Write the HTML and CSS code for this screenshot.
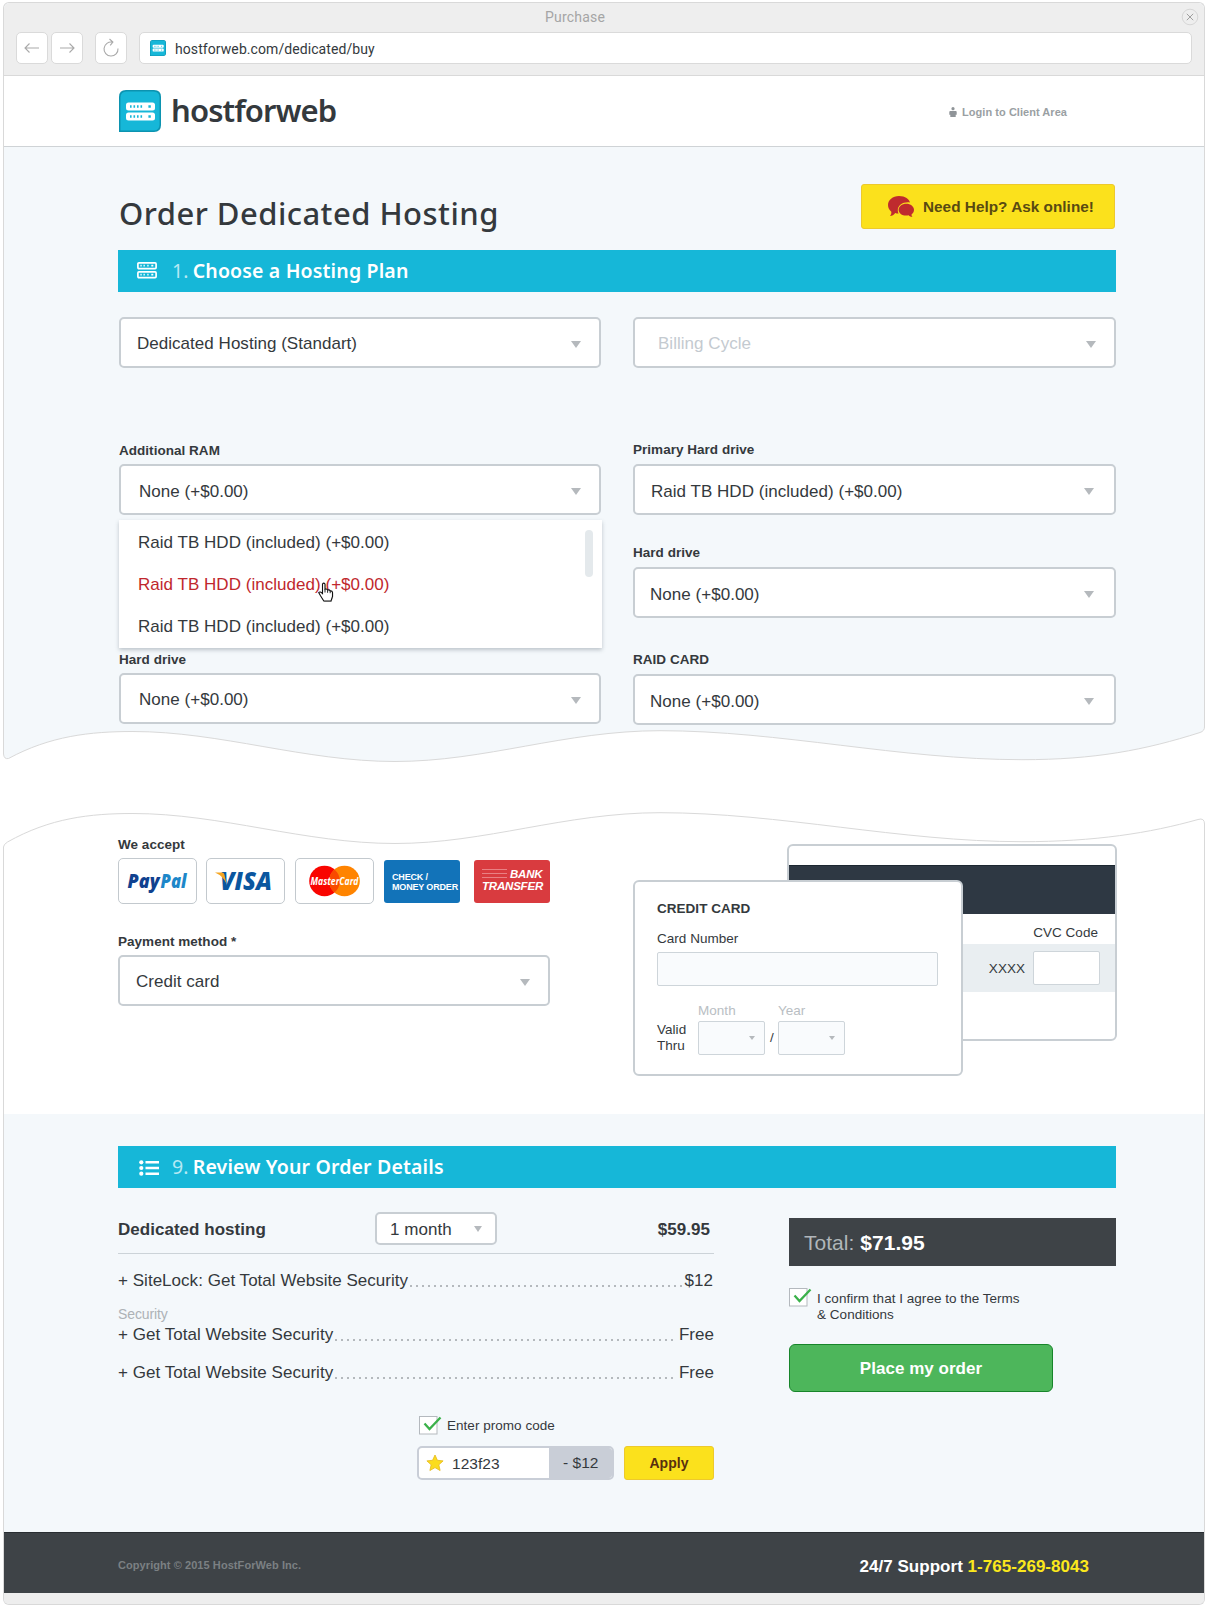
FILE: index.html
```html
<!DOCTYPE html>
<html lang="en">
<head>
<meta charset="utf-8">
<title>Purchase</title>
<link rel="stylesheet" href="styles.css">
</head>
<body>
<svg class="defs" width="0" height="0" aria-hidden="true">
  <symbol id="logo" viewBox="0 0 42 42">
    <path d="M0 42V7Q0 0 7 0H35Q42 0 42 7V35Q42 42 35 42Z" fill="#0c93b0"/>
    <path d="M1.5 40.500V7.500Q1.500 1.500 7.500 1.500H34.500Q40.500 1.500 40.500 7.500V34.500Q40.500 40.500 34.500 40.500Z" fill="#16b7d8"/>
    <rect x="7" y="12.500" width="29" height="8" rx="2.500" fill="#fff"/>
    <rect x="7" y="22.500" width="29" height="8" rx="2.500" fill="#fff"/>
    <path d="M11 16.500h1.600m1.900 0h1.600m1.900 0h1.600m1.900 0h1.600m6.300 0h2.400M11 26.500h1.600m1.900 0h1.600m1.900 0h1.600m1.900 0h1.600m6.300 0h2.400" stroke="#16b7d8" stroke-width="2.400"/>
  </symbol>
  <symbol id="check" viewBox="0 0 24 20">
    <rect x=".5" y="1.500" width="17.500" height="17.500" fill="#fff" stroke="#b4b9be"/>
    <path d="M5.500 8.500l5 5.500L21.500 2.500" fill="none" stroke="#3bb14a" stroke-width="2.300"/>
  </symbol>
</svg>

<div class="window window-top">
  <header class="chrome">
    <div class="chrome-title">Purchase</div>
    <svg class="close" width="18" height="18" viewBox="0 0 18 18"><circle cx="9" cy="9" r="7.800" fill="none" stroke="#d6d6d6"/><path d="M5.800 5.800l6.400 6.400M12.200 5.800l-6.400 6.400" stroke="#a0a0a0" fill="none"/></svg>
    <div class="toolbar">
      <span class="tool"><svg width="18" height="12" viewBox="0 0 18 12"><path d="M16 6H2M6.500 1.500L2 6l4.500 4.500"/></svg></span>
      <span class="tool"><svg width="18" height="12" viewBox="0 0 18 12"><path d="M2 6h14M11.500 1.500L16 6l-4.500 4.500"/></svg></span>
      <span class="tool reload"><svg width="18" height="20" viewBox="0 0 18 20"><path d="M16 10.500A7 7 0 1 1 10.500 4.200M7.500 1l3.400 3-2.700 3.400"/></svg></span>
      <div class="url"><svg width="16" height="16"><use href="#logo"/></svg><span>hostforweb.com/dedicated/buy</span></div>
    </div>
  </header>

  <div class="site-head">
    <svg width="42" height="42"><use href="#logo"/></svg>
    <span class="brand">hostforweb</span>
    <span class="login"><svg width="8" height="10" viewBox="0 0 8 10"><circle cx="4" cy="1.700" r="1.600"/><path d="M.3 4.900q0-1 1-1h5.400q1 0 1 1V7.800h-1V10H1.300V7.800h-1z"/></svg>Login to Client Area</span>
  </div>

  <main class="order">
    <div class="title-row">
      <h1>Order Dedicated Hosting</h1>
      <button class="help"><svg width="26" height="21" viewBox="0 0 26 21"><path d="M11 0C17.500 0 21 3 22 6.400 15.500 5.500 9.500 9 9.800 14.500c0 1.200.3 2.200.8 3-1.300 0-2.300-.1-3.400-.5C6 18.800 4 19.900 2 20c1.100-1.200 1.500-2.600 1.300-4.200C1.300 14 0 11.700 0 9 0 4 4.700 0 11 0z"/><path d="M18.300 7.700c4.300 0 7.700 2.700 7.700 6 0 2-1 3.600-2.500 4.700 0 1 .3 1.800 1 2.600-1.600-.1-2.900-.8-3.900-1.700-5.400 1.200-10-1.700-10-5.600 0-3.300 3.400-6 7.700-6z"/></svg>Need Help? Ask online!</button>
    </div>
    <h2 class="bar"><svg class="i-server" width="20" height="17" viewBox="0 0 20 17"><rect x=".9" y=".9" width="18.200" height="5.700" rx="1"/><rect x=".9" y="9.900" width="18.200" height="5.700" rx="1"/><path d="M3.400 3.700h1.300m1.800 0h1.300m2.500 0h1.300m2.700 0h2M3.400 12.700h1.300m1.800 0h1.300m2.500 0h1.300m2.700 0h2"/></svg><span class="num">1.</span>Choose a Hosting Plan</h2>

    <div class="cols plan">
      <div class="select s-a"><span>Dedicated Hosting (Standart)</span><i></i></div>
      <div class="select s-b"><span>Billing Cycle</span><i></i></div>
    </div>

    <div class="cols options">
      <div class="col">
        <div class="field">
          <label>Additional RAM</label>
          <div class="select"><span>None (+$0.00)</span><i></i></div>
          <ul class="menu">
            <li>Raid TB HDD (included) (+$0.00)</li>
            <li class="hover">Raid TB HDD (included) (+$0.00)</li>
            <li>Raid TB HDD (included) (+$0.00)</li>
          </ul>
          <svg class="cursor" width="17" height="21" viewBox="0 0 17 21"><path class="shade" d="M5 2.500Q6.500 1 7.600 2.500V8q2-.8 2.700.7 2-.6 2.600.9 2-.3 2.300 1.400V15l-1.700 5H6.300L3 14.500l-1.700-3.200Q2.500 10 5 12z"/><path class="hand" d="M4.500 2Q5.700.2 7 2v5.300q1.900-.8 2.600.7 2-.6 2.600.9 2-.3 2.300 1.400V14.500L13 19H5.800L2.500 13.800.7 10.600Q2 9 4.500 11.500z"/><path d="M7 7.500v3M9.600 8.200v2.600M12.200 9v2.200" fill="none" stroke="#111" stroke-width=".9"/></svg>
        </div>
        <div class="field low">
          <label>Hard drive</label>
          <div class="select"><span>None (+$0.00)</span><i></i></div>
        </div>
      </div>
      <div class="col right">
        <div class="field">
          <label>Primary Hard drive</label>
          <div class="select"><span>Raid TB HDD (included) (+$0.00)</span><i></i></div>
        </div>
        <div class="field">
          <label>Hard drive</label>
          <div class="select"><span>None (+$0.00)</span><i></i></div>
        </div>
        <div class="field">
          <label>RAID CARD</label>
          <div class="select"><span>None (+$0.00)</span><i></i></div>
        </div>
      </div>
    </div>
  </main>
</div>

<svg class="wave" width="1202" height="40" viewBox="3 725 1202 40">
  <path d="M3.500 724V754Q4 759.500 8.500 758.500C50 736 90 731.500 133 731.500C220 731.500 305 761.500 395 761.500C485 761.500 565 730.700 660 730.700C780 730.700 900 759.700 1022 759.700C1095 759.700 1145 750 1200 732.500Q1204.500 731 1204.500 727V724" fill="#f4f8fb" stroke="#d9d9d9"/>
</svg>
<svg class="wave second" width="1202" height="40" viewBox="3 810 1202 40">
  <path d="M3.500 851V847Q3.500 844.500 7.500 842C50 818 90 813.500 133 813.500C220 813.500 305 843.500 395 843.500C485 843.500 565 812.700 660 812.700C780 812.700 900 841.700 1022 841.700C1095 841.700 1150 833 1198 819.500Q1204.500 817.500 1204.500 824V851" fill="#fff" stroke="#d9d9d9"/>
</svg>

<div class="window window-bottom">
  <section class="payment">
    <div class="pay-left">
      <label>We accept</label>
      <div class="methods">
        <span class="method"><svg width="77" height="44" viewBox="0 0 77 44" font-family="Open Sans, sans-serif" font-size="19.500" font-weight="800" font-style="italic"><text x="8.500" y="29" textLength="32" lengthAdjust="spacingAndGlyphs" fill="#10418f">Pay</text><text x="41.500" y="29" textLength="26" lengthAdjust="spacingAndGlyphs" fill="#1d87c9">Pal</text></svg></span>
        <span class="method"><svg width="77" height="44" viewBox="0 0 77 44"><text x="13" y="31" textLength="52" lengthAdjust="spacingAndGlyphs" font-family="Open Sans, sans-serif" font-size="24" font-weight="800" font-style="italic" fill="#0b569f">VISA</text><path d="M8 13.500h7q2 0 2.400 2l2 9Q16 17 8 13.500z" fill="#f5a623"/></svg></span>
        <span class="method"><svg width="77" height="44" viewBox="0 0 77 44"><circle cx="28.500" cy="22" r="15.300" fill="#f90500"/><circle cx="48.500" cy="22" r="15.300" fill="#ff8400"/><path d="M38.500 10.400a15.300 15.300 0 0 1 0 23.200a15.300 15.300 0 0 1 0-23.200z" fill="#f94a00"/><text x="14.500" y="26" textLength="48" lengthAdjust="spacingAndGlyphs" font-family="Open Sans, sans-serif" font-size="10.500" font-weight="700" font-style="italic" fill="#fff">MasterCard</text></svg></span>
        <span class="method check">CHECK /<br>MONEY ORDER</span>
        <span class="method bank"><span class="lines"></span>BANK<br>TRANSFER</span>
      </div>
      <label class="pm">Payment method *</label>
      <div class="select"><span>Credit card</span><i></i></div>
    </div>
    <div class="cards">
      <div class="card back">
        <div class="stripe"></div>
        <div class="cvc-label">CVC Code</div>
        <div class="cvc"><span>XXXX</span><span class="input"></span></div>
      </div>
      <div class="card front">
        <strong>CREDIT CARD</strong>
        <div class="cn">Card Number</div>
        <div class="input number"></div>
        <div class="valid">
          <div class="thru">Valid<br>Thru</div>
          <div class="date"><small>Month</small><span class="input"><i></i></span></div>
          <div class="slash">/</div>
          <div class="date"><small>Year</small><span class="input"><i></i></span></div>
        </div>
      </div>
    </div>
  </section>

  <section class="review">
    <h2 class="bar"><svg class="i-list" width="20" height="16" viewBox="0 0 20 16"><circle cx="2.300" cy="2.300" r="2.100"/><circle cx="2.300" cy="8" r="2.100"/><circle cx="2.300" cy="13.700" r="2.100"/><path d="M6.500 1.100H20v2.400H6.500zM6.500 6.800H20v2.400H6.500zM6.500 12.500H20v2.400H6.500z"/></svg><span class="num">9.</span>Review Your Order Details</h2>
    <div class="review-cols">
      <div class="lines-col">
        <div class="main-line"><b class="name">Dedicated hosting</b><div class="select small"><span>1 month</span><i></i></div><b class="price">$59.95</b></div>
        <div class="line first"><span>+ SiteLock: Get Total Website Security</span><span class="dots"></span><span>$12</span></div>
        <div class="group">Security</div>
        <div class="line"><span>+ Get Total Website Security</span><span class="dots"></span><span>Free</span></div>
        <div class="line next"><span>+ Get Total Website Security</span><span class="dots"></span><span>Free</span></div>
        <div class="promo">
          <div class="tick"><svg width="24" height="20"><use href="#check"/></svg><span>Enter promo code</span></div>
          <div class="promo-row">
            <div class="code"><svg width="18" height="18" viewBox="0 0 18 18"><path d="M9 1l2.400 5.300 5.700.6-4.300 3.900 1.300 5.700L9 13.600l-5.100 2.900 1.300-5.700L.9 6.900l5.700-.6z" fill="#fbdc1d" stroke="#e8bd25" stroke-width=".9"/></svg><span class="value">123f23</span><span class="off">- $12</span></div>
            <button class="apply">Apply</button>
          </div>
        </div>
      </div>
      <div class="total-col">
        <div class="total">Total: <b>$71.95</b></div>
        <div class="tick agree"><svg width="24" height="20"><use href="#check"/></svg><span>I confirm that I agree to the Terms<br>&amp; Conditions</span></div>
        <button class="place">Place my order</button>
      </div>
    </div>
  </section>

  <footer>
    <span class="copy">Copyright © 2015 HostForWeb Inc.</span>
    <span class="support">24/7 Support <em>1-765-269-8043</em></span>
  </footer>
  <div class="window-foot"></div>
</div>
</body>
</html>
```
FILE: styles.css
```css
* { box-sizing: border-box; }
body {
  margin: 0;
  padding: 2px 3px 0;
  width: 1208px;
  height: 1608px;
  background: #fff;
  color: #34393d;
  font: 17px "Liberation Sans", Arial, sans-serif;
  letter-spacing: .03px;
  white-space: nowrap;
}
svg { display: block; flex: none; }
.defs { position: absolute; }
button { font-family: inherit; letter-spacing: inherit; padding: 0; }
h1, h2, ul { margin: 0; padding: 0; list-style: none; }
.window { width: 1202px; border: 1px solid #d9d9d9; }

/* browser frame */
.window-top { height: 723px; border-bottom: 0; border-radius: 6px 6px 0 0; background: #f4f8fb; }
.chrome { position: relative; height: 73px; background: #eee; border-bottom: 1px solid #d9d9d9; border-radius: 6px 6px 0 0; }
.chrome-title { height: 29px; padding: 0 58px 0 0; text-align: center; font: 14px/29px Roboto, sans-serif; letter-spacing: .2px; color: #a5a5a5; }
.close { position: absolute; right: 5px; top: 5px; }
.toolbar { display: flex; padding-left: 12px; gap: 3px; }
.tool { display: flex; align-items: center; justify-content: center; width: 32px; height: 32px; background: #fff; border: 1px solid #dadada; border-radius: 5px; }
.tool svg { fill: none; stroke: #a9a9a9; stroke-width: 1.1; }
.reload { margin: 0 9px; }
.url { display: flex; align-items: center; gap: 9px; width: 1053px; height: 32px; padding-left: 10px; background: #fff; border: 1px solid #dadada; border-radius: 5px; font: 14px Roboto, sans-serif; letter-spacing: .08px; }
.url span { padding-top: 2px; }

/* site header */
.site-head { display: flex; height: 71px; padding: 14px 137px 0 115px; background: #fff; border-bottom: 1px solid #cfd3d6; }
.brand { margin-left: 10px; font: 600 31px/41px "Noto Sans", sans-serif; letter-spacing: -.88px; }
.login { display: flex; gap: 5px; margin: 14px 0 0 auto; height: 16px; font-size: 11px; font-weight: bold; line-height: 17px; letter-spacing: .04px; color: #9a9fa3; }
.login svg { fill: #8f9498; margin-top: 3px; }

.order { width: 998px; margin-left: 114px; }
.title-row { display: flex; justify-content: space-between; height: 103px; }
h1 { margin: 46px 0 0 1px; font: 500 31px/40px "Noto Sans", sans-serif; letter-spacing: .47px; }
.help { display: flex; align-items: center; gap: 9px; width: 254px; height: 45px; margin: 37px 1px 0 0; padding-left: 26px; background: #fbe11c; border: 1px solid #edc92c; border-radius: 3px; color: #594a12; font-size: 15.3px; font-weight: bold; }
.help svg { fill: #bf2b2e; }
.bar { display: flex; align-items: center; width: 998px; height: 42px; background: #16b7d8; color: #fff; font: 600 19.5px/44px "Noto Sans", sans-serif; letter-spacing: .16px; }
.bar .num { margin-right: 4px; font-weight: 400; color: #b5e9f4; }
.i-server { margin: -2px 15px 0 19px; fill: none; stroke: #fff; stroke-width: 1.7; }
.i-list { margin: 1px 13px 0 21px; fill: #fff; }

/* form fields */
.cols { display: grid; grid-template-columns: 482px 483px; gap: 32px; margin-left: 1px; }
.plan { margin-top: 25px; }
.options { margin-top: 72px; }
.field { position: relative; }
label { display: block; height: 24px; font-size: 13.5px; font-weight: bold; line-height: 21px; }
.select { display: flex; align-items: center; justify-content: space-between; height: 51px; padding: 0 18px; background: #fff; border: 2px solid #c8ced3; border-radius: 5px; }
.select span { padding-top: 4px; }
.select i, .date i { width: 0; height: 0; margin-top: 3px; border: 5px solid transparent; border-top: 7px solid #b5b9bd; border-bottom: 0; }
.s-a { padding-left: 16px; }
.s-b { padding: 0 18px 0 23px; color: #c4cad0; }
.s-a span, .s-b span, .low .select span { padding-top: 3px; }
.right label { line-height: 20px; }
.right .select { padding: 0 20px 0 16px; }
.right .field + .field { margin-top: 28px; }
.right .field + .field .select { padding-left: 15px; }
.right .field + .field + .field { margin-top: 32px; }
.low { margin-top: 134px; }
.menu { position: absolute; z-index: 2; left: 0; top: 80px; width: 483px; height: 128px; padding: 2px 0 0 19px; background: #fff; box-shadow: 0 2px 4px rgba(60, 75, 90, .3); }
.menu li { height: 41.8px; line-height: 42px; }
.menu .hover { color: #c0272d; }
.menu::after { content: ""; position: absolute; right: 9px; top: 10px; width: 8px; height: 47px; border-radius: 4px; background: #e4e9ec; }
.cursor { position: absolute; z-index: 3; left: 199px; top: 142px; }
.cursor .shade { fill: rgba(0, 0, 0, .25); }
.cursor .hand { fill: #fff; stroke: #111; stroke-width: 1.1; }
.wave.second { margin-top: 45px; }

/* payment */
.window-bottom { height: 755px; border-top: 0; border-radius: 0 0 6px 6px; background: #f4f8fb; }
.payment { display: flex; height: 264px; padding-left: 114px; background: #fff; }
.pay-left { position: relative; width: 432px; margin: -16px 83px 0 0; }
.pay-left label { height: 20px; }
.methods { display: flex; align-items: center; height: 46px; margin: 4px 0 27px; }
.method { width: 79px; height: 46px; margin-right: 10px; border: 1px solid #c3c9ce; border-radius: 5px; }
.method:nth-child(2) { margin-left: -1px; }
.check, .bank { width: 76px; height: 43px; border: 0; border-radius: 3px; color: #fff; font-weight: bold; }
.check { padding: 12px 0 0 8px; background: #1273b9; font-size: 9px; line-height: 10.5px; letter-spacing: -.17px; }
.bank { position: relative; margin: 0 0 0 4px; padding: 8px 0 0 8px; background: #d93b3f; font-size: 11.5px; font-style: italic; line-height: 12.5px; letter-spacing: -.2px; }
.lines { display: inline-block; width: 25px; height: 9px; margin-right: 3px; background: repeating-linear-gradient(#e98083 0 1px, transparent 1px 4px); }
.pay-left .pm { height: 24px; }
.pay-left .select { padding: 0 18px 0 16px; }
.pay-left .select span { padding-top: 2px; }
.cards { position: relative; width: 484px; height: 233px; margin-top: -6px; font-size: 13.5px; }
.card { position: absolute; width: 330px; height: 197px; background: #fff; border: 2px solid #c8ced3; border-radius: 6px; }
.back { right: 0; top: 0; padding-top: 19px; }
.front { left: 0; top: 36px; height: 196px; padding: 17px 22px 0; }
.stripe { height: 49px; background: #2e3843; border-top: 1px solid #1c2731; }
.cvc-label { height: 30px; padding: 9px 17px 0 0; text-align: right; line-height: 20px; }
.cvc { display: flex; align-items: center; justify-content: flex-end; gap: 8px; height: 48px; padding-right: 15px; background: #e9eef1; }
.input { width: 67px; height: 34px; border: 1px solid #ced5da; border-radius: 2px; background: #f9fbfd; }
.cvc .input { background: #fff; }
.front strong { display: block; line-height: 20px; font-size: 13.5px; }
.cn { margin: 10px 0 3px; line-height: 20px; }
.number { width: 281px; }
.valid { display: flex; margin-top: 15px; }
.thru { width: 41px; padding-top: 21px; line-height: 16px; }
.date { width: 67px; }
.date small { display: block; height: 20px; font-size: 13.5px; line-height: 19px; color: #b9bec3; }
.date .input { display: flex; align-items: center; justify-content: flex-end; padding-right: 9px; }
.date i { margin-top: 0; border-width: 4px 3px 0; }
.slash { width: 13px; padding: 28px 0 0 5px; line-height: 18px; }

/* review */
.review { height: 418px; padding: 32px 0 0 114px; }
.review-cols { display: flex; justify-content: space-between; width: 998px; }
.lines-col { width: 596px; }
.main-line { display: flex; align-items: center; height: 66px; padding: 16px 4px 0 0; border-bottom: 1px solid #ccd3d8; }
.name, .price { padding-top: 2px; }
.main-line .name { width: 257px; }
.select.small { width: 122px; height: 33px; padding: 0 13px; }
.small span { padding-top: 2px; }
.small i { margin: 0; border-width: 6px 4px 0; }
.price { margin-left: auto; }
.line { display: flex; height: 24px; line-height: 24px; }
.first { margin-top: 15px; padding-right: 1px; }
.next { margin-top: 14px; }
.dots { flex: 1; height: 2px; margin: 16px 2px 0; background: repeating-linear-gradient(90deg, #b4b9bd 0 2px, transparent 2px 6px); }
.group { margin-top: 13px; font-size: 14px; line-height: 17px; letter-spacing: -.1px; color: #adb2b6; }
.promo { margin: 30px 0 0 301px; }
.tick { display: flex; gap: 4px; font-size: 13.5px; line-height: 21px; }
.promo-row { display: flex; justify-content: space-between; margin: 10px 0 0 -2px; }
.code { display: flex; width: 197px; height: 34px; border: 2px solid #c9ced7; border-radius: 5px; background: #fff; font-size: 15.500px; line-height: 30px; overflow: hidden; }
.code svg { margin: 6px 8px 0 7px; }
.value { width: 97px; line-height: 32px; }
.off { flex: 1; padding-left: 14px; background: #c9ced7; }
.apply { width: 90px; height: 34px; background: #fbe11c; border: 1px solid #edc92c; border-radius: 3px; color: #59300f; font-size: 14px; font-weight: bold; }
.total-col { width: 327px; padding-top: 30px; }
.total { height: 48px; padding-left: 15px; background: #3e4347; color: #b0b6ba; font-size: 21px; line-height: 49px; }
.total b { color: #fff; }
.agree { height: 54px; margin-top: 21px; line-height: 16px; }
.agree span { padding-top: 4px; }
.place { display: block; width: 264px; height: 48px; margin-top: 3px; padding-top: 1px; background: #4db65b; border: 1px solid #17852a; border-radius: 6px; color: #fff; font-size: 17px; font-weight: bold; }

footer { display: flex; justify-content: space-between; align-items: center; height: 61px; padding: 1px 115px 0 114px; background: #3e4347; border-top: 1px solid #292e32; font-weight: bold; }
.copy { padding-top: 3px; font-size: 11px; letter-spacing: .07px; color: #7b8083; }
.support { padding-top: 7px; color: #fff; }
.support em { font-style: normal; color: #fbe81c; }
.window-foot { height: 11px; background: #eee; border-radius: 0 0 5px 5px; }
```
